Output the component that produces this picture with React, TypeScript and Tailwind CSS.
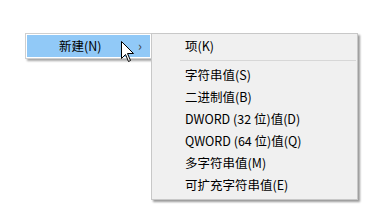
import React from "react";

const items = [
  "字符串值(S)",
  "二进制值(B)",
  "DWORD (32 位)值(D)",
  "QWORD (64 位)值(Q)",
  "多字符串值(M)",
  "可扩充字符串值(E)",
];

export default function App() {
  return (
    <div
      className="relative w-[374px] h-[211px] bg-white overflow-hidden text-[12.5px] text-black"
      style={{ fontFamily: '"Noto Sans CJK SC", "Noto Sans", sans-serif' }}
    >
      <div className="flex items-start pt-[33px] pl-[25px]">
        <div className="w-[127px] border border-[#cfcfcf] bg-white p-[1px] shadow-[2px_2px_2px_rgba(0,0,0,0.35)] relative z-0">
          <div className="h-[22px] bg-[#91c9f7] flex items-center pl-[32px] pr-[8px] pt-[1px]">
            <span className="leading-none">新建(N)</span>
            <span className="ml-auto text-[13px] leading-none text-[#444] pb-[2px]">›</span>
          </div>
        </div>
        <div className="-ml-[1px] w-[207px] h-[167px] border border-[#c8c8c8] bg-[#f0f0f0] pt-[1px] shadow-[2px_2px_2px_rgba(0,0,0,0.4)] relative z-10">
          <div className="h-[22px] flex items-center pl-[33px] pt-[1px]">项(K)</div>
          <div className="h-[7px] flex items-center pl-[28px] pr-[1px]">
            <div className="h-px w-full bg-[#d7d7d7]" />
          </div>
          {items.map((t) => (
            <div key={t} className="h-[22px] flex items-center pl-[33px] pt-[1px] whitespace-nowrap">
              {t}
            </div>
          ))}
        </div>
      </div>
      <svg
        className="absolute left-[121px] top-[41px] z-20"
        width="14"
        height="22"
        viewBox="0 0 14 22"
      >
        <path
          d="M0.5 0.5 L0.5 17.5 L4.5 13.5 L7.5 20.5 L9.5 19.5 L6.5 12.5 L12.5 12.5 Z"
          fill="white"
          stroke="black"
          strokeWidth="1"
          strokeLinejoin="miter"
        />
      </svg>
    </div>
  );
}
